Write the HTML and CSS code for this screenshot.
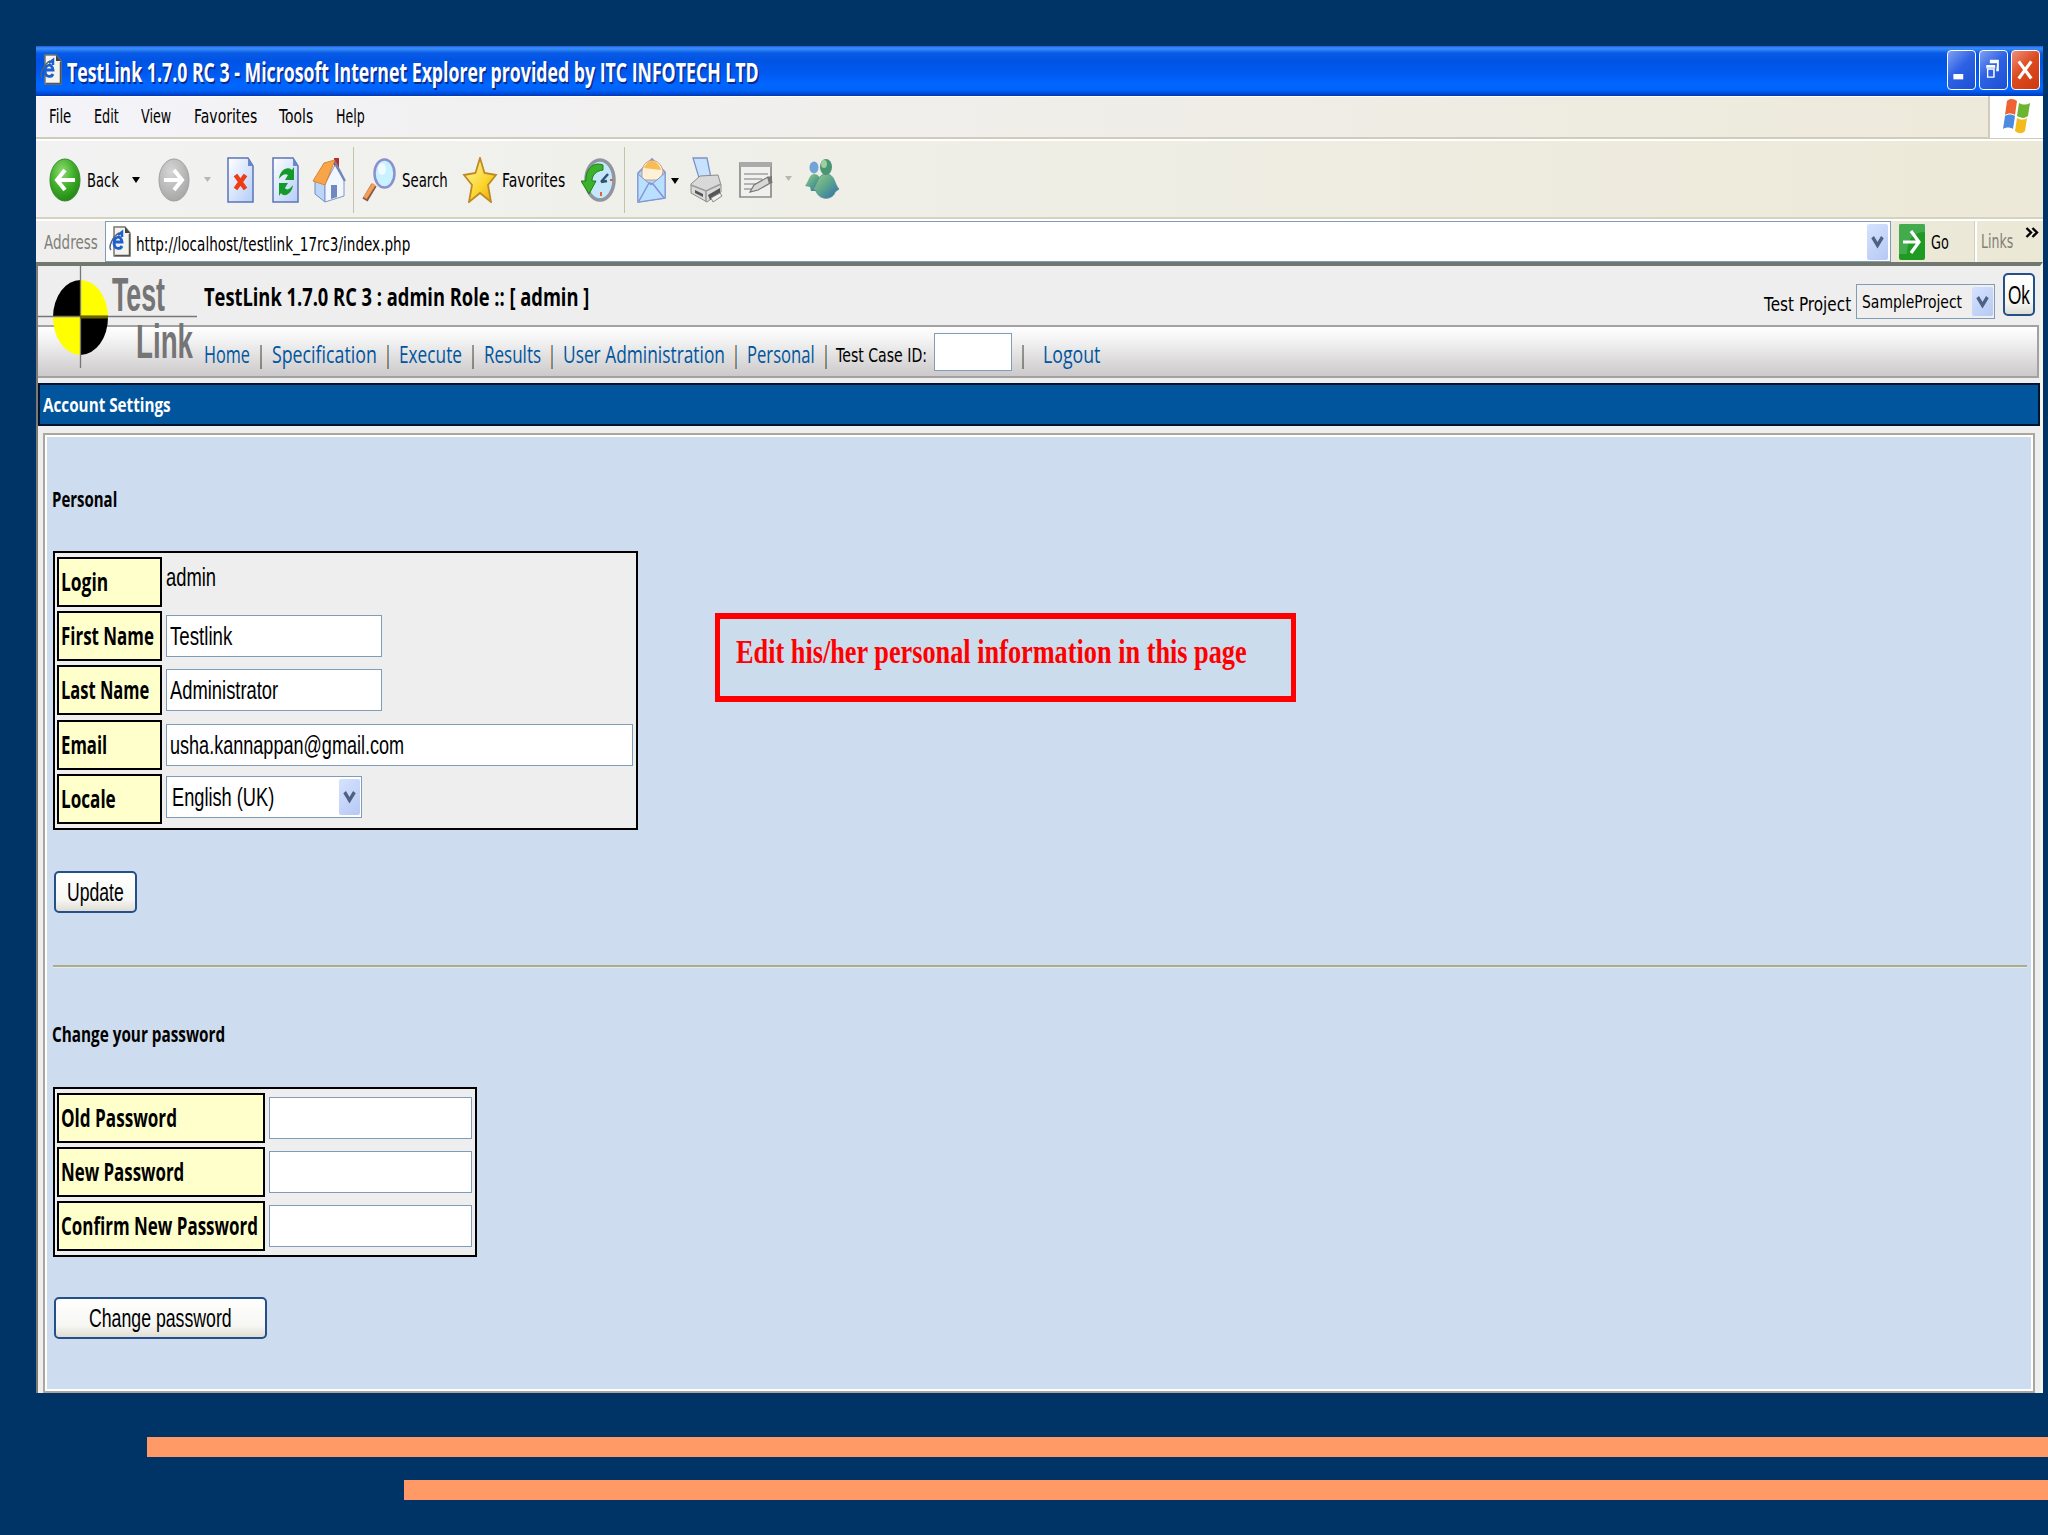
FILE: index.html
```html
<!DOCTYPE html>
<html lang="en">
<head>
<meta charset="utf-8">
<title>TestLink 1.7.0 RC 3</title>
<link rel="stylesheet" href="styles.css">
</head>
<body>
<svg width="0" height="0" class="defs">
  <defs>
    <radialGradient id="gGreen" cx=".4" cy=".3" r=".8"><stop offset="0" stop-color="#8fdc70"/><stop offset=".5" stop-color="#3fae2a"/><stop offset="1" stop-color="#1c7d10"/></radialGradient>
    <radialGradient id="gGrey" cx=".4" cy=".3" r=".8"><stop offset="0" stop-color="#d6d6d6"/><stop offset="1" stop-color="#a2a2a2"/></radialGradient>
    <linearGradient id="gPage" x1="0" y1="0" x2="1" y2="1"><stop offset="0" stop-color="#fff"/><stop offset="1" stop-color="#b4cdf8"/></linearGradient>
    <linearGradient id="gStar" x1="0" y1="0" x2="1" y2="1"><stop offset="0" stop-color="#fffbb0"/><stop offset=".6" stop-color="#fbd52c"/><stop offset="1" stop-color="#e8a010"/></linearGradient>
    <linearGradient id="gMan" x1="0" y1="0" x2="1" y2="1"><stop offset="0" stop-color="#9ecb8a"/><stop offset=".5" stop-color="#5aa58c"/><stop offset="1" stop-color="#2f66b8"/></linearGradient>
    <symbol id="iePage" viewBox="0 0 22 31" preserveAspectRatio="none">
      <path d="M5 1h11l5 6v23H5z" fill="#f4f4ee" stroke="#77776f" stroke-width="1.5"/>
      <path d="M16 1v6h5z" fill="#444"/><path d="M20.500 8v21.500H6" stroke="#555" stroke-width="1.500" fill="none"/>
      <path d="M13 20c-2 4-8 3-8-3s7-9 8-1H6" fill="none" stroke="#1d5fd0" stroke-width="2.800"/>
      <path d="M9 9l4-3v5" stroke="#1d5fd0" stroke-width="2.500" fill="none"/>
      <path d="M2 24c-3-3 2-14 8-17" stroke="#50627c" stroke-width="1.500" fill="none"/>
    </symbol>
    <symbol id="chev" viewBox="0 0 12 12" preserveAspectRatio="none"><path d="M1.500 2.500L6 9l4.500-6.500" fill="none" stroke="#4d6185" stroke-width="3"/></symbol>
  </defs>
</svg>

<div class="window">
  <header class="titlebar">
    <svg class="title-icon"><use href="#iePage"/></svg>
    <span class="t title-text" data-w="692">TestLink 1.7.0 RC 3 - Microsoft Internet Explorer provided by ITC INFOTECH LTD</span>
    <div class="win-buttons">
      <span class="wb"><svg viewBox="0 0 29 40"><path d="M6 25h11v6H6z" fill="#fff"/></svg></span>
      <span class="wb"><svg viewBox="0 0 29 40"><path d="M11 9h10v4H11zM19 13h2v9h-3M7 15h10v4H7zM8 18v10.500h8V18" fill="#fff" fill-rule="evenodd"/><path d="M8.500 19.500h7v9h-7z" fill="#2d62e4" stroke="#fff" stroke-width="1.500"/></svg></span>
      <span class="wb close"><svg viewBox="0 0 29 40"><path d="M7.500 11l14 19M21.500 11l-14 19" stroke="#fff" stroke-width="3.500"/></svg></span>
    </div>
  </header>

  <div class="menubar">
    <nav class="menu">
      <span class="t" data-w="22">File</span><span class="t" data-w="25">Edit</span><span class="t" data-w="30">View</span><span class="t" data-w="63">Favorites</span><span class="t" data-w="34">Tools</span><span class="t" data-w="29">Help</span>
    </nav>
    <div class="flag"><svg width="30" height="38" viewBox="0 0 30 38">
      <path d="M5 3c3-3 7-2 10 0l-2 14c-3-2-7-2-10 0z" fill="#ee6334"/><path d="M17 5c4 2 7 2 11 0l-2 13c-4 3-7 2-11 0z" fill="#6db52f"/>
      <path d="M3 18c3-2 7-2 10 0l-2 13c-3-2-7-2-10 0z" fill="#4c8be0"/><path d="M15 20c4 2 7 2 10 0l-2 13c-3 3-6 3-10 0z" fill="#f3bb1c"/></svg></div>
  </div>

  <div class="toolbar">
    <svg width="32" height="44" viewBox="0 0 32 44"><ellipse cx="16" cy="22" rx="15" ry="21" fill="url(#gGreen)" stroke="#3a8a2c"/><path d="M26 22H9M16 12L8 22l8 10" fill="none" stroke="#fff" stroke-width="4"/></svg>
    <span class="t" data-w="32">Back</span>
    <svg width="8" height="44" viewBox="0 0 8 44"><path d="M0 19h8l-4 6z" fill="#000"/></svg>
    <svg width="32" height="44" viewBox="0 0 32 44"><ellipse cx="16" cy="22" rx="15" ry="21" fill="url(#gGrey)" stroke="#a0a0a0"/><path d="M6 22h17M16 12l8 10-8 10" fill="none" stroke="#fff" stroke-width="4"/></svg>
    <svg width="8" height="44" viewBox="0 0 8 44"><path d="M0 19h7l-3.500 5z" fill="#b8b8b0"/></svg>
    <svg width="29" height="46" viewBox="0 0 29 46"><path d="M2 1h20l5 8v36H2z" fill="url(#gPage)" stroke="#5c74b8" stroke-width="1.500"/><path d="M22 1v8h5z" fill="#6c88cc"/><path d="M9.500 18l10 14M19.500 18l-10 14" stroke="#f03c14" stroke-width="4.500"/></svg>
    <svg width="29" height="46" viewBox="0 0 29 46"><path d="M2 1h20l5 8v36H2z" fill="url(#gPage)" stroke="#5c74b8" stroke-width="1.500"/><path d="M22 1v8h5z" fill="#6c88cc"/><path d="M8 22c1-10 9-13 13-9l2-3v13h-9l3-5c-3-2-6 0-9 4zM22 28c-1 9-9 13-12 8l-2 3V26h9l-3 5c2 3 5 1 8-3z" fill="#149a28"/></svg>
    <svg width="34" height="46" viewBox="0 0 34 46"><path d="M22 1h5v14h-5z" fill="#b03030"/><path d="M3 23l10 4v18L3 37z" fill="#bcd6f8" stroke="#6f8cc4"/><path d="M13 27L23 8l9 16v15l-19 6z" fill="#f2f7ff" stroke="#7f96c8"/><path d="M1 24L12 6l11-3-10 25z" fill="#f7a548" stroke="#dc8430"/><path d="M23 5l10 19" stroke="#7184b4" stroke-width="2"/><path d="M19 28h6v12l-6 2z" fill="#7088bc"/></svg>
    <i class="sep"></i>
    <svg width="35" height="46" viewBox="0 0 35 46"><path d="M12 28L3 43" stroke="#8a5a48" stroke-width="6"/><path d="M12 27L3 41" stroke="#f2a058" stroke-width="4"/><ellipse cx="22.500" cy="16.500" rx="10" ry="14" fill="#c8f2ff" stroke="#8c90d0" stroke-width="2.500"/><ellipse cx="20" cy="12" rx="4" ry="6" fill="#fff" opacity=".7"/></svg>
    <span class="t" data-w="46">Search</span>
    <svg width="36" height="46" viewBox="0 0 36 46"><path d="M18 1l4.500 15L34 18l-8 10 3 17-11-9-11 9 3-17-8-10 11.500-2z" fill="url(#gStar)" stroke="#bf8a22" stroke-width="1.800"/></svg>
    <span class="t" data-w="63">Favorites</span>
    <svg width="36" height="44" viewBox="0 0 36 44"><ellipse cx="19" cy="22" rx="14" ry="20" fill="#c4e8fa" stroke="#9294a0" stroke-width="3.500"/><path d="M20 24l7-8M20 24l6-1" stroke="#34506c" stroke-width="2.500"/><path d="M20 34v4M29 22h3" stroke="#e06040" stroke-width="2"/><path d="M22 7C12 3 4 12 5 23H0l8 13 7-13h-4c0-6 4-10 11-11z" fill="#3cb22c" stroke="#1f7d18"/></svg>
    <i class="sep"></i>
    <svg width="31" height="48" viewBox="0 0 31 48"><path d="M2 17L16 3l13 13v26L2 46z" fill="#a9d4fb" stroke="#8494d0" stroke-width="1.600"/><path d="M6 15c2-14 18-14 21 0l-2 9H6z" fill="#fff0d8" stroke="#c89c80"/><path d="M8 12c4-10 13-9 17 2z" fill="#f8bc54"/><path d="M2 18l13 11 14-12v25L2 46z" fill="#b9e0ff" stroke="#8494d0"/><path d="M3 45l10-18 4 1 11 14" fill="none" stroke="#8494d0" stroke-width="1.500"/></svg>
    <svg width="8" height="44" viewBox="0 0 8 44"><path d="M0 20h8l-4 6z" fill="#000"/></svg>
    <svg width="34" height="48" viewBox="0 0 34 48"><path d="M4 2h14l4 20-11 3z" fill="#c6e2ff" stroke="#7e92c4" stroke-width="1.300"/><path d="M2 28l9-8 18-1 3 10v7l-14 10L2 37z" fill="#d9d9d9" stroke="#8b8b8b"/><path d="M2 29l15 6 15-7M17 35v11" stroke="#999" fill="none" stroke-width="1.500"/><path d="M6 34l8 4v3l-8-4zM19 39l12-7v5l-10 7z" fill="#555"/><path d="M22 42l9-5 2 3-9 6z" fill="#f1f1f1" stroke="#888"/></svg>
    <svg width="36" height="44" viewBox="0 0 36 44"><path d="M2 5h31v34H2z" fill="#f0f0ee" stroke="#8c8c8c" stroke-width="1.700"/><path d="M2 4h31v5H2z" fill="#aaa"/><path d="M6 16h24M6 21h18M6 26h14M6 31h8" stroke="#a0a0a0" stroke-width="1.500"/><path d="M12 34l4-7 14-8 4 5-14 8z" fill="#d8d8d8" stroke="#777" stroke-width="1.200"/><path d="M29 19l5-1v6l-3 2z" fill="#777"/></svg>
    <svg width="8" height="44" viewBox="0 0 8 44"><path d="M0 18h7l-3.500 5z" fill="#b8b8b0"/></svg>
    <svg width="36" height="44" viewBox="0 0 36 44"><path d="M1 28c3-3 4-12 9-12s6 4 7 10l-3 7H7l-1-4z" fill="url(#gMan)"/><ellipse cx="10" cy="9.500" rx="4.500" ry="6" fill="#72a4d8"/><path d="M9 31c4-3 4-15 13-15s8 10 13 15l-4 3c-1 7-15 10-19-1z" fill="url(#gMan)" stroke="#4f8f84" stroke-width=".8"/><ellipse cx="22" cy="9" rx="6" ry="8" fill="#4a9673"/><ellipse cx="20" cy="6" rx="3" ry="4" fill="#9ccfa0"/></svg>
  </div>

  <div class="addressbar">
    <span class="t addr-label" data-w="54">Address</span>
    <div class="addr-field">
      <svg class="addr-icon"><use href="#iePage"/></svg>
      <span class="t url" data-w="274">http://localhost/testlink_17rc3/index.php</span>
      <span class="drop addr-drop"><svg><use href="#chev"/></svg></span>
    </div>
    <svg class="go-icon" width="26" height="36" viewBox="0 0 26 36"><rect width="26" height="36" rx="2" fill="#1f9a22"/><path d="M0 0h26v8Q8 8 8 30H0z" fill="#5cb86a" opacity=".6"/><path d="M4 18h16M12 7l8 11-8 11" fill="none" stroke="#fff" stroke-width="3.200"/></svg>
    <span class="t go-text" data-w="18">Go</span>
    <span class="links"><span class="t" data-w="32">Links</span><svg width="14" height="14" viewBox="0 0 14 14"><path d="M1.500 2L6 6.500 1.500 11M7.500 2L12 6.500 7.500 11" fill="none" stroke="#000" stroke-width="2.400"/></svg></span>
  </div>

  <main class="page">
    <svg class="logo" width="162" height="110" viewBox="36 264 162 110">
      <path d="M80.500 280A27.500 37.500 0 0 0 53 317h27.500z" fill="#000"/><path d="M80.500 280A27.500 37.500 0 0 1 108 317H80.500z" fill="#ff0"/>
      <path d="M80.500 355A27.500 37.500 0 0 1 53 317h27.500z" fill="#ff0"/><path d="M80.500 355A27.500 37.500 0 0 0 108 317H80.500z" fill="#000"/>
      <path d="M80.500 266v102M38 316.500h159" stroke="#777" stroke-width="1.300" fill="none"/>
      <path d="M80 317h28" stroke="#6a6400" stroke-width="3"/>
      <text class="logo-text" x="112" y="311" textLength="53" lengthAdjust="spacingAndGlyphs">Test</text>
      <text class="logo-text" x="136" y="358" textLength="57" lengthAdjust="spacingAndGlyphs">Link</text>
    </svg>
    <div class="page-head">
      <span class="t head-text" data-w="385">TestLink 1.7.0 RC 3 : admin Role :: [ admin ]</span>
      <span class="t project-label" data-w="87">Test Project</span>
      <span class="select project"><span class="t" data-w="100">SampleProject</span><span class="drop"><svg><use href="#chev"/></svg></span></span>
      <span class="btn ok"><span class="t" data-w="22">Ok</span></span>
    </div>
    <nav class="page-nav">
      <span class="t link" data-w="46">Home</span><span class="t bar-sep" data-w="4">|</span>
      <span class="t link" data-w="105">Specification</span><span class="t bar-sep" data-w="4">|</span>
      <span class="t link" data-w="63">Execute</span><span class="t bar-sep" data-w="4">|</span>
      <span class="t link" data-w="57">Results</span><span class="t bar-sep" data-w="4">|</span>
      <span class="t link" data-w="162">User Administration</span><span class="t bar-sep" data-w="4">|</span>
      <span class="t link" data-w="68">Personal</span><span class="t bar-sep" data-w="4">|</span>
      <span class="t case-label" data-w="91">Test Case ID:</span><span class="field case-field"></span><span class="t bar-sep" data-w="4">|</span>
      <span class="t link logout" data-w="57">Logout</span>
    </nav>
    <h1 class="bar"><span class="t" data-w="128">Account Settings</span></h1>

    <section class="panel">
      <h2><span class="t" data-w="65">Personal</span></h2>
      <div class="form personal">
        <label><span class="t" data-w="47">Login</span></label><div class="plain"><span class="t" data-w="50">admin</span></div>
        <label><span class="t" data-w="93">First Name</span></label><div class="field short"><span class="t" data-w="62">Testlink</span></div>
        <label><span class="t" data-w="88">Last Name</span></label><div class="field short"><span class="t" data-w="108">Administrator</span></div>
        <label><span class="t" data-w="46">Email</span></label><div class="field"><span class="t" data-w="234">usha.kannappan@gmail.com</span></div>
        <label><span class="t" data-w="55">Locale</span></label><div class="select locale"><span class="t" data-w="102">English (UK)</span><span class="drop"><svg><use href="#chev"/></svg></span></div>
      </div>
      <div class="btn update"><span class="t" data-w="57">Update</span></div>
      <hr>
      <h2><span class="t" data-w="173">Change your password</span></h2>
      <div class="form password">
        <label><span class="t" data-w="116">Old Password</span></label><div class="field"></div>
        <label><span class="t" data-w="123">New Password</span></label><div class="field"></div>
        <label><span class="t" data-w="197">Confirm New Password</span></label><div class="field"></div>
      </div>
      <div class="btn change"><span class="t" data-w="143">Change password</span></div>
    </section>
  </main>
</div>

<div class="note"><span class="t" data-w="511">Edit his/her personal information in this page</span></div>
<div class="stripe one"></div>
<div class="stripe two"></div>
<script src="fit.js"></script>
</body>
</html>
```
FILE: styles.css
```css
* { box-sizing: border-box; }
body { margin: 0; width: 2048px; height: 1535px; padding: 46px 0 0 36px; background: #003366; overflow: hidden; position: relative; font-family: "DejaVu Sans", sans-serif; font-size: 20px; color: #000; }
.defs { position: absolute; }
svg { display: block; flex: none; }
.t { display: inline-block; flex: none; white-space: pre; line-height: 30px; height: 30px; }
.t > span { display: inline-block; transform-origin: 0 50%; }

.window { width: 2007px; height: 1347px; background: #efeeee; overflow: hidden; display: flex; flex-direction: column; }
.titlebar { height: 50px; flex: none; display: flex; align-items: center; padding: 0 3px 0 4px; background: linear-gradient(#1c58d8 0, #3a8ff8 2px, #2a80f4 4px, #0a5be6 7px, #0054e3 14px, #0058ee 26px, #0066ff 38px, #0064fa 44px, #0040c8 49px, #0038b0 50px); }
.title-icon { width: 22px; height: 31px; margin: -4px 5px 0 0; }
.title-text { font: bold 26px/34px "Open Sans", sans-serif; height: 34px; margin-top: 1px; color: #fff; text-shadow: 2px 2px 0 #0a2a8c; }
.win-buttons { margin-left: auto; display: flex; gap: 3px; margin-top: -2px; }
.wb { width: 29px; height: 40px; border: 1.5px solid #fff; border-radius: 4px; background: linear-gradient(135deg, #7f9ff4, #2d62e4 45%, #1c50d4); }
.wb svg { width: 26px; height: 37px; }
.wb.close { background: linear-gradient(135deg, #f0907c, #dd4a20 45%, #cc3a10); }

.menubar { height: 45px; flex: none; display: flex; justify-content: space-between; background: linear-gradient(90deg, #f4f3f8, #f0efec 40%, #ede9da); border-bottom: 2px solid #fff; box-shadow: inset 0 1px #fff, inset 0 -2px #cfccbc; }
.menu { display: flex; gap: 22.6px; padding: 5px 0 0 13px; }
.flag { width: 55px; height: 42px; background: #fff; border-left: 2px solid #d0ccbc; padding: 2px 0 0 12px; }

.toolbar { height: 78px; flex: none; display: grid; align-items: center; justify-content: start; padding: 0 0 1px 13px; grid-template-columns: 38px 45px 26px 46px 22px 45px 41px 41px 9px 40px 60px 40px 79px 43px 12px 35px 18px 49px 47px 19px 40px; background: linear-gradient(90deg, #f2f2f2, #efefe8 40%, #ede9d8); box-shadow: inset 0 -2px #d6d2c0; }
.sep { width: 1px; height: 66px; background: #c4c1ae; }

.addressbar { height: 43px; flex: none; display: flex; align-items: center; padding-left: 8px; background: linear-gradient(90deg, #f0efee, #efeee8 40%, #ece8d6); border-top: 2px solid #fff; }
.addr-label { color: #808078; margin-right: 7px; }
.addr-field { width: 1786px; height: 41px; border: 1.5px solid #7f9db9; background: #fff; display: flex; align-items: center; padding: 0 2px 0 3px; }
.addr-icon { width: 22px; height: 31px; margin-right: 5px; }
.url { font-size: 20px; margin-top: 4px; }
.drop { flex: none; width: 21px; height: 36px; margin-left: auto; border-radius: 2px; background: linear-gradient(135deg, #d6e2fe, #b6c9f4); display: flex; align-items: center; justify-content: center; }
.drop svg { width: 13px; height: 15px; }
.go-icon { margin: 0 6px 0 8px; }
.go-text { margin-right: 26px; }
.links { height: 41px; border-left: 2px solid #fff; box-shadow: -1px 0 #d4d0bc; padding: 5px 0 0 4px; display: flex; gap: 12px; color: #808078; }

.page { flex: 1; position: relative; border-left: 2px solid #7b7b74; border-right: 3px solid #f6f3e8; border-top: 4px solid #70786f; background: #efeeee; }
.logo { position: absolute; left: -2px; top: -2px; overflow: visible; }
.logo-text { font: bold 49px/1 "Liberation Sans", sans-serif; fill: #757575; }
.page-head { height: 59px; padding-left: 166px; display: flex; align-items: flex-start; }
.head-text { font: bold 25px/34px "Open Sans", sans-serif; height: 34px; margin-top: 13px; }
.project-label { margin: 23px 5px 0 auto; }
.select { display: flex; align-items: center; border: 1.5px solid #7f9db9; background: #fff; padding: 0 1px 0 5px; }
.project { width: 139px; height: 35px; margin: 18px 8px 0 0; background: #f0efee; font-size: 18px; }
.project .drop { height: 29px; }
.btn { display: flex; align-items: center; justify-content: center; border: 2px solid #24508a; border-radius: 5px; background: linear-gradient(#fff, #f6f6f3 70%, #dfddd4); font: 25px "Liberation Sans", sans-serif; }
.ok { width: 32px; height: 43px; margin: 7px 5px 0 0; }
.page-nav { height: 53px; margin-right: 1px; padding: 0 0 0 166px; display: flex; align-items: center; gap: 9px; border: solid #a3a1a1; border-width: 2px 2px 2px 0; background: linear-gradient(#fff, #f5f4f4 25%, #cbc9c9); font: 23px "Open Sans", sans-serif; }
.page-nav .t { margin-top: 5px; }
.page-nav .bar-sep { font-weight: bold; }
.link { color: #00559e; }
.page-nav .case-label { font: 20px/30px "DejaVu Sans", sans-serif; margin: 7px -2px 0 -1px; }
.field { border: 1.5px solid #7f9db9; background: #fff; }
.case-field { width: 78px; height: 38px; }
.page-nav .logout { margin-left: 9px; }
.bar { margin: 5px 0 0; height: 43px; border: 2px solid #001430; background: #00559c; color: #fff; padding: 5px 0 0 3px; font: bold 20px "Open Sans", sans-serif; }

.panel { margin: 7px 5px 0 5px; height: 960px; border: 2px solid #aaa89c; box-shadow: inset 0 0 0 2px #fff; background: #cddcee; padding: 49px 6px 0 7px; }
h2 { margin: 0; height: 30px; font: bold 20.5px "Open Sans", sans-serif; }
.form { display: grid; border: 2px solid #000; background: #efeeee; padding: 4px 2px; grid-auto-rows: 50px; row-gap: 4.2px; column-gap: 4px; margin: 37px 0 0 1px; font: 25px "Liberation Sans", sans-serif; align-items: center; }
.form label { height: 50px; border: 2px solid #000; background: #ffffcc; padding: 5px 0 0 2px; font: bold 25.500px "Open Sans", sans-serif; }
.personal { width: 585px; grid-template-columns: 105px 467px; }
.form .field { height: 42px; padding: 5px 0 0 3px; }
.short { width: 216px; }
.plain { padding-bottom: 11px; }
.locale { width: 196px; height: 42px; margin-top: -4px; }
.btn .t { height: 30px; }
.update { width: 83px; height: 42px; margin: 41px 0 0 2px; }
hr { height: 3px; margin: 52px 0 51px 1px; border: solid; border-width: 2px 0 1px; border-color: #a9ac94 transparent #e8ecd8; background: none; }
.password { width: 424px; margin-top: 38px; grid-template-columns: 208px 203px; }
.change { width: 213px; height: 42px; margin: 40px 0 0 2px; }

.note { position: absolute; left: 715px; top: 613px; width: 581px; height: 89px; border: solid #ff0000; border-width: 6px 5px; background: #cbdcec; padding: 14px 0 0 16px; color: #ff0000; font: bold 34px "Liberation Serif", serif; }
.stripe { height: 20px; background: #ff9966; }
.one { margin: 44px 0 0 111px; }
.two { margin: 23px 0 0 368px; }
```
FILE: fit.js
```js
// Condense each label horizontally to the width given in data-w.
document.querySelectorAll('.t').forEach(function (el) {
  var inner = document.createElement('span');
  while (el.firstChild) inner.appendChild(el.firstChild);
  el.appendChild(inner);
  var natural = inner.offsetWidth;
  var target = Number(el.dataset.w);
  el.style.width = target + 'px';
  inner.style.transform = 'scaleX(' + target / natural + ')';
});
```
